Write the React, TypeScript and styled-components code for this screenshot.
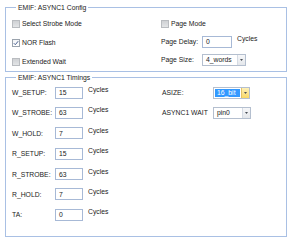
import React from 'react';
import styled, { createGlobalStyle } from 'styled-components';

const Global = createGlobalStyle`
  html, body { margin: 0; padding: 0; background: #ffffff; }
  body {
    font-family: "Liberation Sans", Arial, sans-serif;
    font-size: 6.8px;
    color: #1a1a1a;
  }
`;

const Page = styled.div`
  width: 290px;
  height: 240px;
  box-sizing: border-box;
  padding: 3px 3px 3px 5px;
  display: flex;
  flex-direction: column;
  gap: 1px;
`;

const Group = styled.fieldset<{ $h: number }>`
  margin: 0;
  padding: 0 6px 0 6px;
  border: 1px solid #a9c0e4;
  height: ${(p) => p.$h}px;
  box-sizing: border-box;
  min-width: 0;
`;

const Legend = styled.legend`
  padding: 0 2px;
  margin-left: 4px;
  line-height: 9px;
  font-size: 6.8px;
`;

const ConfigBody = styled.div`
  display: grid;
  grid-template-columns: 149px 1fr;
  padding-top: 5px;
`;

const Column = styled.div<{ $gap: number }>`
  display: flex;
  flex-direction: column;
  gap: ${(p) => p.$gap}px;
`;

const Row = styled.div<{ $h?: number }>`
  display: flex;
  align-items: center;
  height: ${(p) => p.$h ?? 13}px;
  white-space: nowrap;
`;

const CheckRow = styled(Row)`
  gap: 2px;
`;

const Box = styled.span<{ $checked?: boolean }>`
  width: 8px;
  height: 8px;
  box-sizing: border-box;
  border: 1px solid ${(p) => (p.$checked ? '#9aa3ad' : '#b9bcc0')};
  background: ${(p) =>
    p.$checked ? 'linear-gradient(#f2f4f6, #ffffff)' : 'linear-gradient(#cfd1d4, #e3e5e7)'};
  display: inline-flex;
  align-items: center;
  justify-content: center;
`;

const Label = styled.span<{ $w?: number }>`
  display: inline-block;
  width: ${(p) => (p.$w ? `${p.$w}px` : 'auto')};
  flex: none;
`;

const TextBox = styled.div<{ $w: number }>`
  width: ${(p) => p.$w}px;
  height: 12px;
  box-sizing: border-box;
  border: 1px solid #a7b9d6;
  background: #fff;
  padding: 0 3px;
  display: flex;
  align-items: center;
  flex: none;
`;

const Unit = styled.span`
  margin-left: 5px;
  align-self: flex-start;
`;

const Select = styled.div<{ $w: number }>`
  width: ${(p) => p.$w}px;
  height: 12px;
  box-sizing: border-box;
  border: 1px solid #b4bfcf;
  background: #fff;
  display: flex;
  align-items: stretch;
  flex: none;
`;

const SelectText = styled.span<{ $sel?: boolean }>`
  flex: 1;
  display: flex;
  align-items: center;
  padding-left: 2px;
  margin: 1px;
  background: ${(p) => (p.$sel ? '#3399ff' : 'transparent')};
  color: ${(p) => (p.$sel ? '#fff' : '#1a1a1a')};
`;

const DropButton = styled.span<{ $hot?: boolean }>`
  width: 8px;
  box-sizing: border-box;
  border-left: 1px solid ${(p) => (p.$hot ? '#e5c366' : '#d5dbe4')};
  background: ${(p) =>
    p.$hot ? 'linear-gradient(#fdf0b8, #f9d866)' : 'linear-gradient(#f6f7f9, #e4e7eb)'};
  display: flex;
  align-items: center;
  justify-content: center;
`;

const Arrow = () => (
  <svg width="3" height="2" viewBox="0 0 3 2">
    <path d="M0 0H3L1.5 2Z" fill="#4a4f57" />
  </svg>
);

const Check = ({ checked }: { checked?: boolean }) => (
  <Box $checked={checked}>
    {checked && (
      <svg width="6" height="6" viewBox="0 0 6 6">
        <path d="M0.8 3.2L2.3 4.7L5.2 1.2" stroke="#4a5f90" strokeWidth="1" fill="none" />
      </svg>
    )}
  </Box>
);

const Dropdown = ({ w, value, hot }: { w: number; value: string; hot?: boolean }) => (
  <Select $w={w}>
    <SelectText $sel={hot}>{value}</SelectText>
    <DropButton $hot={hot}>
      <Arrow />
    </DropButton>
  </Select>
);

const TimingsBody = styled.div`
  display: grid;
  grid-template-columns: 150px 1fr;
  padding-top: 4px;
`;

const timings: [string, string][] = [
  ['W_SETUP:', '15'],
  ['W_STROBE:', '63'],
  ['W_HOLD:', '7'],
  ['R_SETUP:', '15'],
  ['R_STROBE:', '63'],
  ['R_HOLD:', '7'],
  ['TA:', '0'],
];

export default function App() {
  return (
    <>
      <Global />
      <Page>
        <Group $h={69}>
          <Legend>EMIF: ASYNC1 Config</Legend>
          <ConfigBody>
            <Column $gap={6}>
              <CheckRow>
                <Check />
                <Label>Select Strobe Mode</Label>
              </CheckRow>
              <CheckRow>
                <Check checked />
                <Label>NOR Flash</Label>
              </CheckRow>
              <CheckRow>
                <Check />
                <Label>Extended Wait</Label>
              </CheckRow>
            </Column>
            <Column $gap={5}>
              <CheckRow>
                <Check />
                <Label>Page Mode</Label>
              </CheckRow>
              <Row>
                <Label $w={41}>Page Delay:</Label>
                <TextBox $w={30}>0</TextBox>
                <Unit>Cycles</Unit>
              </Row>
              <Row>
                <Label $w={41}>Page Size:</Label>
                <Dropdown w={44} value="4_words" />
              </Row>
            </Column>
          </ConfigBody>
        </Group>
        <Group $h={164}>
          <Legend>EMIF: ASYNC1 Timings</Legend>
          <TimingsBody>
            <Column $gap={7.4}>
              {timings.map(([l, v]) => (
                <Row key={l}>
                  <Label $w={43}>{l}</Label>
                  <TextBox $w={28}>{v}</TextBox>
                  <Unit>Cycles</Unit>
                </Row>
              ))}
            </Column>
            <Column $gap={7}>
              <Row>
                <Label $w={51}>ASIZE:</Label>
                <Dropdown w={37} value="16_bit" hot />
              </Row>
              <Row>
                <Label $w={51}>ASYNC1 WAIT</Label>
                <Dropdown w={38} value="pin0" />
              </Row>
            </Column>
          </TimingsBody>
        </Group>
      </Page>
    </>
  );
}
